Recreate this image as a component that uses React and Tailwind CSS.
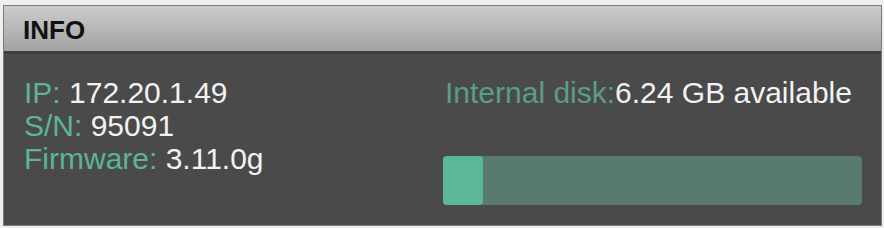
export default function App() {
  const font = { fontFamily: '"Liberation Sans", Arial, sans-serif' };
  const used = 40;
  return (
    <div className="w-[884px] h-[228px] bg-[#efefef] pt-[5px] pl-[3px] pr-[2px] pb-[2px]" style={font}>
      <div className="w-full h-full flex flex-col border border-[#7a7a7a] bg-[#4a4a4a]">
        <div className="h-[48px] shrink-0 flex items-center pl-[19px] pt-[2px] bg-gradient-to-b from-[#cbcbcb] to-[#a3a3a3] border-b-[3px] border-[#3c3c3c]">
          <span className="text-[26px] font-bold text-[#111] leading-none">INFO</span>
        </div>
        <div className="flex-1 flex pt-[22px] pl-[20px] text-[30px] leading-[33px]">
          <div className="w-[419px] flex flex-col">
            <div>
              <span className="text-[#5cb592]">IP: </span>
              <span className="text-[#f2f2f2]">172.20.1.49</span>
            </div>
            <div>
              <span className="text-[#5cb592]">S/N: </span>
              <span className="text-[#f2f2f2]">95091</span>
            </div>
            <div>
              <span className="text-[#5cb592]">Firmware: </span>
              <span className="text-[#f2f2f2]">3.11.0g</span>
            </div>
          </div>
          <div className="w-[419px] flex flex-col">
            <div className="pl-[2px] whitespace-nowrap">
              <span className="text-[#5a9e84]">Internal disk:</span>
              <span className="text-[#f2f2f2]">6.24 GB available</span>
            </div>
            <div className="mt-[47px] h-[49px] w-[419px] rounded-[4px] bg-[#587a71] flex">
              <div className="h-full rounded-[4px] bg-[#5bb796]" style={{ width: `${used}px` }} />
            </div>
          </div>
        </div>
      </div>
    </div>
  );
}
